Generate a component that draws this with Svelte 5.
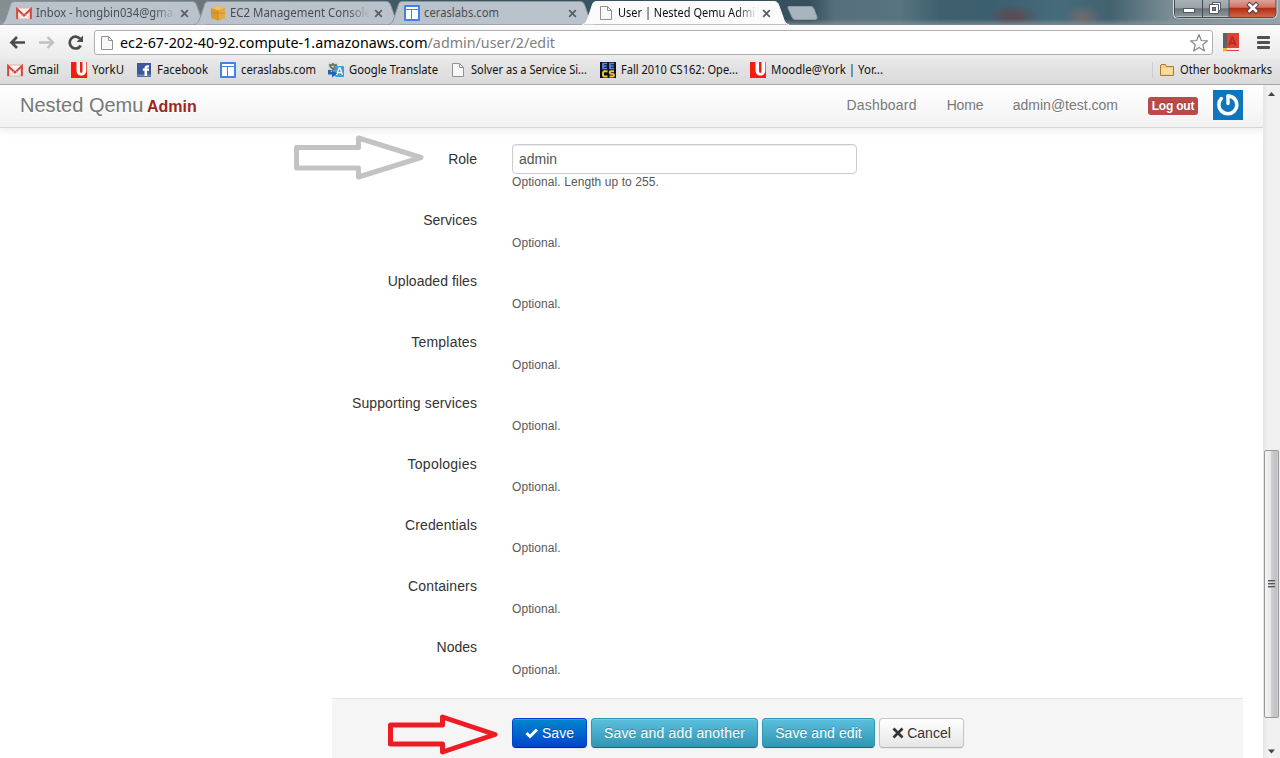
<script>
  const tabs = [
    { icon: 'gmail', title: 'Inbox - hongbin034@gma', w: 137, fade: true },
    { icon: 'cube', title: 'EC2 Management Console', w: 141, fade: true },
    { icon: 'site', title: 'ceraslabs.com', w: 75 },
    { icon: 'page', title: 'User | Nested Qemu Admi', w: 137, active: true, fade: true }
  ];
  const bookmarks = [
    { icon: 'gmail', label: 'Gmail', x: 7, w: 31 },
    { icon: 'york', label: 'YorkU', x: 71, w: 32 },
    { icon: 'fb', label: 'Facebook', x: 136, w: 51 },
    { icon: 'site', label: 'ceraslabs.com', x: 220, w: 75 },
    { icon: 'translate', label: 'Google Translate', x: 328, w: 89 },
    { icon: 'page', label: 'Solver as a Service Si...', x: 450, w: 116 },
    { icon: 'eecs', label: 'Fall 2010 CS162: Ope...', x: 600, w: 117 },
    { icon: 'york', label: 'Moodle@York | Yor...', x: 750, w: 112 }
  ];
  const fields = [
    { name: 'Services', spacing: 0.02 },
    { name: 'Uploaded files', spacing: 0.04 },
    { name: 'Templates', spacing: 0.22 },
    { name: 'Supporting services', spacing: 0.11 },
    { name: 'Topologies', spacing: 0.25 },
    { name: 'Credentials', spacing: 0.1 },
    { name: 'Containers', spacing: 0.12 },
    { name: 'Nodes', spacing: 0 }
  ];
</script>

{#snippet icon(name)}
  <svg class="icon" width="16" height="16" viewBox="0 0 16 16">
    {#if name === 'gmail'}
      <rect x="0.5" y="3" width="15" height="11" fill="#f7f3f2" stroke="#d9b3ae" />
      <path d="M1.2 14V4L8 10.5L14.8 4V14" fill="none" stroke="#d8433b" stroke-width="2" />
      <path d="M3 13.5L6.5 9.5M13 13.5L9.5 9.5" stroke="#dcc8c5" />
    {:else if name === 'cube'}
      <path d="M1 3L8 0.5L15 3V13L8 15.5L1 13Z" fill="#d99a2b" />
      <path d="M1 3L8 5.5L15 3L8 .5Z" fill="#ecc069" />
      <path d="M8 5.5L15 3V13L8 15.5Z" fill="#e3aa40" />
      <path d="M8 5.5V15.5M1 8L15 8" stroke="#c08420" stroke-width=".6" />
    {:else if name === 'site'}
      <rect width="16" height="16" rx="1" fill="#4280ea" />
      <path d="M2 2H14V4H2ZM2 5H7V14H2ZM8 5H14V14H8Z" fill="#fff" />
    {:else if name === 'page'}
      <path d="M2.5 1.5H9.5L13.5 5.5V14.500H2.5Z" fill="#f8f8f8" stroke="#929292" />
      <path d="M9.5 1.5V5.5H13.5" fill="none" stroke="#929292" />
    {:else if name === 'york'}
      <rect width="16" height="16" fill="#f91c0d" />
      <path d="M5.500 0V8.500C5.500 15.300 15.300 15.300 15.300 8.500V0H11.500V9C11.500 11.500 9 11.500 9 9V0Z" fill="#fff" />
    {:else if name === 'fb'}
      <rect x="1" y="1" width="14" height="14" fill="#3b5998" />
      <rect x="1" y="12.5" width="14" height="2" fill="#7187b7" />
      <path d="M8.5 14V8.8H6.8V6.5H8.5C8.5 3.7 9.6 3 13 3.2V5.4C11.4 5.3 11.1 5.5 11.1 6.5H13V8.8H11.1V14Z" fill="#fff" />
    {:else if name === 'translate'}
      <path d="M0 0.500H10V9H0Z" fill="#d5d9d0" />
      <path d="M1 3H9M5 1V3M8 3C7 6 4 8 2 9M2 4C4 7 6 8 8 9" fill="none" stroke="#5d655d" stroke-width="1.5" />
      <path d="M7 4H15Q16 4 16 5V15H8Q6 14 6 12Z" fill="#36a3df" />
      <path d="M8.5 13L11.2 6H12L14.5 13M9.5 10.7H13.5" fill="none" stroke="#fff" stroke-width="1.3" />
      <path d="M0 8V12.500H4V15.500L9 11.500L4 8V10H2.500V8Z" fill="#1c63b8" />
    {:else if name === 'eecs'}
      <rect width="16" height="16" fill="#0d1022" />
      <path d="M7.200 1.500H3V6.500H7.200M3 4H6.700M14.200 1.500H10V6.500H14.200M10 4H13.700" fill="none" stroke="#5b86e5" stroke-width="1.700" />
      <path d="M7.500 9.300H4L3 10.300V13.500L4 14.500H7.500M14 9.300H10.700Q9.700 9.300 9.700 10.500T11 11.900H13Q14 12 14 13.2T13 14.5H9.5" fill="none" stroke="#f4c51c" stroke-width="1.900" />
    {:else if name === 'folder'}
      <path d="M1.5 4Q1.500 2.500 3 2.500H6.500L7.500 4.500H14.500V13.500H1.500Z" fill="#f5cd83" stroke="#a97c31" />
      <path d="M2.500 6H13.500V12.500H2.500Z" fill="#fbdc9a" />
    {/if}
  </svg>
{/snippet}

<div class="window">
  <div class="strip">
    {#each tabs as t}
      <div class="tab" class:active={t.active}>
        <svg class="shape" width="208" height="25" viewBox="0 0 208 25">
          <path d="M0 24.500C4 24 5 21 7 15L10 6C11 2.500 12 1.500 15 1.500H192C195 1.500 196 3 197 6L202 20C203 23 205 24.500 207 24.500" />
        </svg>
        {@render icon(t.icon)}
        <svg class="title" class:fade={t.fade} width="142" height="18"><text y="13" textLength={t.w} lengthAdjust="spacingAndGlyphs">{t.title}</text></svg>
        <svg class="close" width="9" height="9" viewBox="0 0 9 9"><path d="M1.200 1.200L7.800 7.800M7.800 1.200L1.200 7.800" /></svg>
      </div>
    {/each}
    <svg class="newtab" width="32" height="16" viewBox="0 0 32 16"><path d="M2 1.500H24Q26 1.500 27 4L30 12Q30.500 14.500 28 14.500H8Q6 14.500 5 12L1 3Q.5 1.500 2 1.500Z" /></svg>
    <svg class="controls" width="106" height="19" viewBox="0 0 106 19">
      <defs>
        <linearGradient id="glass" x2="0" y2="1"><stop stop-color="#a9b2b6" /><stop offset=".45" stop-color="#98a1a5" /><stop offset=".5" stop-color="#687478" /><stop offset="1" stop-color="#929ea2" /></linearGradient>
        <linearGradient id="red" x2="0" y2="1"><stop stop-color="#dda398" /><stop offset=".42" stop-color="#cf7566" /><stop offset=".5" stop-color="#b62b13" /><stop offset="1" stop-color="#d36846" /></linearGradient>
      </defs>
      <path d="M1 0V13Q1 17.500 5.500 17.500H99Q103.500 17.500 103.500 13V0" fill="url(#glass)" stroke="#d8dcdd" stroke-width="2" />
      <path d="M56 0H103V13Q103 17 99 17H56Z" fill="url(#red)" />
      <path d="M1.500 0V13Q1.500 17.500 5.500 17.500H99Q103 17.500 103 13V0M29.500 0V17M56 0V17" fill="none" stroke="#444d52" />
      <rect x="10.500" y="8.500" width="11" height="4" fill="#fff" stroke="#55585d" />
      <path d="M39.500 2.500H47.500V10.500H39.500Z" fill="#fff" stroke="#55585d" />
      <path d="M36.500 4.500H45.500V13.500H36.500Z" fill="#fff" stroke="#55585d" />
      <rect x="39.500" y="7.500" width="3" height="3" fill="#777f83" stroke="#55585d" />
      <path d="M76.500 4.800L83 11M83 4.800L76.500 11" stroke="#4c454b" stroke-width="4.500" stroke-linecap="square" />
      <path d="M76.500 4.800L83 11M83 4.800L76.500 11" stroke="#fff" stroke-width="2.600" stroke-linecap="square" />
    </svg>
  </div>

  <div class="toolbar">
    <svg class="nav" width="84" height="24" viewBox="0 0 84 24">
      <path d="M25 12.500H12M17 7L11.500 12.500L17 18" fill="none" stroke="#4b4b4b" stroke-width="2.700" />
      <path d="M39 12.500H52M47.500 7L53 12.500L47.500 18" fill="none" stroke="#c0c0c0" stroke-width="2.400" />
      <path d="M80.700 15.500A5.900 5.900 0 1 1 80 8.700" fill="none" stroke="#4b4b4b" stroke-width="2.700" />
      <path d="M83 5.500V12H76.500Z" fill="#4b4b4b" />
    </svg>
    <div class="omnibox">
      {@render icon('page')}
      <svg class="url" width="440" height="22"><text y="16" textLength="435" lengthAdjust="spacingAndGlyphs">ec2-67-202-40-92.compute-1.amazonaws.com<tspan>/admin/user/2/edit</tspan></text></svg>
      <svg class="star" width="20" height="20" viewBox="0 0 20 20"><path d="M10 1.500L12.300 7.500L18.500 7.800L13.700 11.700L15.400 17.900L10 14.400L4.600 17.900L6.300 11.700L1.500 7.800L7.700 7.500Z" fill="#fff" stroke="#858585" stroke-width="1.200" stroke-linejoin="round" /></svg>
    </div>
    <svg class="book" width="17" height="19" viewBox="0 0 17 19">
      <rect x="1" width="16" height="18" fill="#db4437" /><rect x="1" width="4" height="18" fill="#5e6061" />
      <path d="M7 12.500L10 4.500H10.800L13.700 12.500M8 10H12.600" fill="none" stroke="#b92c24" stroke-width="1.800" />
      <rect x="5" y="15" width="12" height="2" fill="#f3e6e5" /><path d="M1 15H5V19L3.500 17.500L1 19Z" fill="#edb62c" />
    </svg>
    <svg class="menu" width="13" height="13" viewBox="0 0 13 13"><path d="M1 1.500H12M1 6.500H12M1 11.500H12" stroke="#505050" stroke-width="2.800" stroke-linecap="round" /></svg>
  </div>

  <div class="bookmarks">
    {#each bookmarks as b, i}
      <div class="bm" style:width="{(bookmarks[i + 1]?.x ?? 900) - b.x}px">
        {@render icon(b.icon)}
        <svg class="lbl" width={b.w + 3} height="18"><text y="13" textLength={b.w} lengthAdjust="spacingAndGlyphs">{b.label}</text></svg>
      </div>
    {/each}
    <div class="other">
      {@render icon('folder')}
      <svg class="lbl" width="94" height="18"><text y="13" textLength="92" lengthAdjust="spacingAndGlyphs">Other bookmarks</text></svg>
    </div>
  </div>

  <div class="view">
    <div class="page">
      <div class="navbar">
        <div class="brand">Nested Qemu <b>Admin</b></div>
        <nav>
          <a class="wide" href="#dash">Dashboard</a>
          <a href="#home">Home</a>
          <a href="#user">admin@test.com</a>
          <span class="logout">Log out</span>
          <svg width="30" height="30" viewBox="0 0 30 30">
            <rect width="30" height="30" fill="#0f75bc" />
            <path d="M8.300 8.600A9 9 0 1 0 21.600 8.800Q19.500 6.300 15 6" fill="none" stroke="#fff" stroke-width="3.600" stroke-linecap="round" />
            <path d="M15 6V13.500" stroke="#fff" stroke-width="3.400" stroke-linecap="round" />
          </svg>
        </nav>
      </div>

      <form onsubmit={(e) => e.preventDefault()}>
        <div class="row">
          <svg class="arrow" width="130" height="46" viewBox="0 0 130 46"><path d="M2.500 12.500H64.500V3L127 22.500L64.500 42V33H2.500Z" fill="none" stroke="#c3c3c3" stroke-width="5" stroke-linejoin="round" /></svg>
          <label for="role">Role</label>
          <div class="field"><input id="role" type="text" value="admin" /><p>Optional. Length up to 255.</p></div>
        </div>
        {#each fields as f}
          <div class="row">
            <span class="label" style:letter-spacing="{f.spacing}px">{f.name}</span>
            <div class="field"><div class="empty"></div><p>Optional.</p></div>
          </div>
        {/each}
        <div class="actions">
          <svg class="arrow red" width="112" height="42" viewBox="0 0 112 42"><path d="M2.500 11H54.500V3L107 20.500L54.500 38V30H2.500Z" fill="none" stroke="#ed1c24" stroke-width="5" stroke-linejoin="round" /></svg>
          <button class="primary"><svg width="14" height="14" viewBox="0 0 14 14"><path d="M1.500 7L5 10.500L12 3.500" fill="none" stroke="#fff" stroke-width="3" /></svg>Save</button>
          <button class="info add">Save and add another</button>
          <button class="info edit">Save and edit</button>
          <button class="cancel"><svg width="14" height="14" viewBox="0 0 14 14"><path d="M2.500 2.500L11.500 11.500M11.500 2.500L2.500 11.500" stroke="#333" stroke-width="2.700" /></svg>Cancel</button>
        </div>
      </form>
    </div>

    <div class="scrollbar">
      <svg class="up" width="17" height="17"><path d="M5 11L8.500 7L12 11Z" fill="#444" /></svg>
      <div class="thumb"><i></i><i></i><i></i></div>
      <svg class="down" width="17" height="17"><path d="M5 8.500L8.500 12.500L12 8.500Z" fill="#444" /></svg>
    </div>
  </div>
</div>

<style>
  :global(body) { overflow: hidden; background: #fff; }
  .window { width: 1280px; height: 758px; display: flex; flex-direction: column; overflow: hidden; font-family: "Noto Sans", "Open Sans", sans-serif; font-size: 12px; }
  .window * { box-sizing: border-box; }
  svg { display: block; flex: none; }
  .strip {
    height: 25px; flex: none; display: flex; position: relative; border-bottom: 1px solid #7c868a;
    background:
      linear-gradient(transparent 19px, rgba(150, 160, 165, .5) 24px),
      radial-gradient(ellipse 26px 12px at 1013px 16px, rgba(105, 62, 67, .75), transparent),
      radial-gradient(ellipse 20px 12px at 1083px 17px, rgba(130, 110, 105, .7), transparent),
      linear-gradient(90deg, #858e90 0, #6e7b80 180px, #3c5663 420px, #375361 600px, #35505e 810px, #566f7c 835px, #587480 900px, #3e606d 940px, #3c5f6f 990px, #466b7a 1060px, #42626f 1110px, #7b8d94 1170px, #97a3a7 1280px);
  }
  .tab { width: 194px; flex: none; position: relative; display: flex; align-items: center; padding: 2px 0 0 16px; }
  .tab.active { z-index: 2; }
  .shape { position: absolute; left: 0; top: 0; }
  .shape path { fill: #bac3cc; stroke: #8b959c; }
  .active .shape path { fill: #fbfbfb; stroke: #fbfbfb; }
  .icon { position: relative; }
  .title { position: relative; margin-left: 4px; }
  .title text { font-size: 12px; fill: #4a4d52; }
  .active .title text { fill: #111; }
  .fade { -webkit-mask-image: linear-gradient(90deg, #000 118px, transparent 140px); mask-image: linear-gradient(90deg, #000 118px, transparent 140px); }
  .close { position: relative; margin-left: 2px; }
  .close path { stroke: #5c5f62; stroke-width: 1.800; }
  .newtab { margin: 5px 0 0 11px; }
  .newtab path { fill: #a8b4be; stroke: #8f9ca5; }
  .controls { position: absolute; right: 1px; top: 0; }
  .toolbar { height: 34px; flex: none; display: flex; align-items: flex-start; padding-top: 5px; background: linear-gradient(#fbfbfb, #ebebeb); }
  .omnibox { margin-left: 10px; width: 1119px; height: 25px; border: 1px solid #b0b0b0; border-radius: 3px; background: #fff; display: flex; align-items: center; padding-left: 4px; }
  .url { margin: 0 auto 0 5px; }
  .url text { font-size: 14.500px; fill: #000; }
  .url tspan { fill: #808080; }
  .star { margin-right: 3px; }
  .book { margin: 3px 0 0 9px; }
  .menu { margin: 6px 0 0 18px; }
  .bookmarks { height: 26px; flex: none; display: flex; align-items: flex-start; padding: 3px 0 0 7px; border-bottom: 1px solid #a8a8a8; background: linear-gradient(#e8e8e8, #dadada); }
  .bm, .other { flex: none; display: flex; align-items: center; gap: 5px; height: 16px; }
  .other { margin-left: auto; padding: 0 6px 0 6px; border-left: 1px solid #c9cdd2; }
  .lbl text { font-size: 12px; fill: #111; }
  .view { flex: 1; display: flex; min-height: 0; font-family: "Liberation Sans", Arial, sans-serif; font-size: 14px; color: #333; }
  .page { width: 1263px; height: 673px; flex: none; overflow: hidden; }
  .navbar { height: 43px; display: flex; justify-content: space-between; padding: 0 20px; background: linear-gradient(#fff, #f2f2f2); border-bottom: 1px solid #d4d4d4; box-shadow: 0 1px 10px rgba(0, 0, 0, .1); color: #777; }
  .brand { font-size: 20px; line-height: 20px; padding-top: 10px; text-shadow: 0 1px 0 #fff; }
  .brand b { font-size: 16px; color: #9d261d; margin-left: -2px; }
  nav { display: flex; align-items: center; padding-bottom: 2px; }
  nav a { color: #777; text-decoration: none; margin-right: 30px; text-shadow: 0 1px 0 #fff; line-height: 20px; }
  nav a:nth-child(2) { margin-right: 29.500px; letter-spacing: -.2px; }
  nav a.wide { letter-spacing: .2px; }
  .logout { background: #b94a48; color: #fff; font-weight: bold; font-size: 12px; line-height: 18px; width: 50px; text-align: center; border-radius: 3px; margin-right: 15px; margin-top: 2px; letter-spacing: -.2px; text-shadow: 0 -1px 0 rgba(0, 0, 0, .25); }
  form { padding: 16px 20px 0 332px; }
  .row { display: flex; height: 61px; position: relative; }
  label, .label { width: 145px; text-align: right; line-height: 20px; padding-top: 5px; flex: none; }
  .field { margin-left: 35px; }
  input { display: block; width: 345px; height: 30px; padding: 4px 6px; border: 1px solid #ccc; border-radius: 4px; font: 14px/20px "Liberation Sans", Arial, sans-serif; color: #555; box-shadow: inset 0 1px 1px rgba(0, 0, 0, .075); }
  .empty { height: 30px; }
  p { margin: 0; font-size: 12px; line-height: 16px; letter-spacing: .08px; color: #595959; }
  .arrow { position: absolute; left: -38px; top: -9px; }
  .arrow.red { left: 56px; top: 15px; }
  .actions { height: 80px; margin-top: 5px; position: relative; display: flex; gap: 4px; padding: 19px 0 0 180px; background: #f5f5f5; border-top: 1px solid #e5e5e5; }
  button { height: 30px; flex: none; border: 1px solid; border-radius: 4px; padding: 0; display: flex; align-items: center; justify-content: center; font: 14px/20px "Liberation Sans", Arial, sans-serif; white-space: nowrap; color: #fff; text-shadow: 0 -1px 0 rgba(0, 0, 0, .25); box-shadow: inset 0 1px 0 rgba(255, 255, 255, .2), 0 1px 2px rgba(0, 0, 0, .05); }
  button svg { margin-right: 3px; }
  .primary { width: 75px; background: linear-gradient(#08c, #04c); border-color: #04c #04c #002a80; }
  .info { background: linear-gradient(#5bc0de, #2f96b4); border-color: #2f96b4 #2f96b4 #1f6377; }
  .add { width: 167px; letter-spacing: .16px; }
  .edit { width: 113px; letter-spacing: .08px; }
  .cancel { width: 85px; color: #333; background: linear-gradient(#fff, #e6e6e6); border-color: #c5c5c5 #c5c5c5 #b3b3b3; text-shadow: 0 1px 1px rgba(255, 255, 255, .75); }
  .cancel svg { margin: 0 2px 0 -1px; }
  .scrollbar { width: 17px; flex: none; background: linear-gradient(90deg, #e6e6e6, #f1f1f1 30%, #f0f0f0); display: flex; flex-direction: column; }
  .thumb { width: 15px; height: 268px; margin: 348px 0 0 1px; border: 1px solid #979797; border-radius: 2px; background: linear-gradient(90deg, #f4f4f4, #e6e6e7 45%, #cfcfd2 50%, #bfbfc3 90%, #dcdcde); display: flex; flex-direction: column; align-items: center; justify-content: center; gap: 1px; }
  .thumb i { width: 7px; height: 2px; background: linear-gradient(#555 50%, #aaa 50%); }
  .down { margin-top: auto; }
</style>
